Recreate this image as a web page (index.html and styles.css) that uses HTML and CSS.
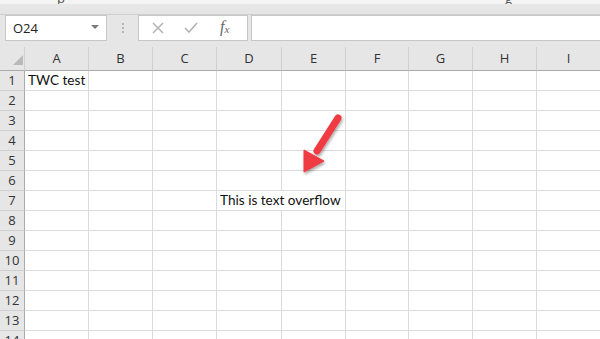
FILE: index.html
```html
<!DOCTYPE html>
<html>
<head>
<meta charset="utf-8">
<link rel="stylesheet" href="styles.css">
</head>
<body>
<div class="app">
  <div class="topstrip"><span class="frag f1">p</span><span class="frag f2">g</span></div>
  <div class="toolbar">
    <div class="namebox"><span class="ref">O24</span><span class="caret"></span></div>
    <div class="dots"><i></i><i></i><i></i></div>
    <div class="fxbox">
      <svg class="ic" width="14" height="14" viewBox="0 0 14 14"><path d="M2 2 L12 12 M12 2 L2 12" stroke="#b3b3b3" stroke-width="1.5" fill="none"/></svg>
      <svg class="ic" width="16" height="14" viewBox="0 0 16 14"><path d="M2 7 L6 11 L14 2" stroke="#b3b3b3" stroke-width="1.6" fill="none"/></svg>
      <span class="fx">f<sub>x</sub></span>
    </div>
    <div class="formula"></div>
  </div>
  <div class="sheet">
    <div class="grid">
      <div class="corner"><span class="tri"></span></div>
      <div class="ch">A</div><div class="ch">B</div><div class="ch">C</div><div class="ch">D</div><div class="ch">E</div><div class="ch">F</div><div class="ch">G</div><div class="ch">H</div><div class="ch">I</div>
      <div class="rh">1</div><div class="c txt">TWC test</div><div class="c"></div><div class="c"></div><div class="c"></div><div class="c"></div><div class="c"></div><div class="c"></div><div class="c"></div><div class="c"></div>
      <div class="rh">2</div><div class="c"></div><div class="c"></div><div class="c"></div><div class="c"></div><div class="c"></div><div class="c"></div><div class="c"></div><div class="c"></div><div class="c"></div>
      <div class="rh">3</div><div class="c"></div><div class="c"></div><div class="c"></div><div class="c"></div><div class="c"></div><div class="c"></div><div class="c"></div><div class="c"></div><div class="c"></div>
      <div class="rh">4</div><div class="c"></div><div class="c"></div><div class="c"></div><div class="c"></div><div class="c"></div><div class="c"></div><div class="c"></div><div class="c"></div><div class="c"></div>
      <div class="rh">5</div><div class="c"></div><div class="c"></div><div class="c"></div><div class="c"></div><div class="c"></div><div class="c"></div><div class="c"></div><div class="c"></div><div class="c"></div>
      <div class="rh">6</div><div class="c"></div><div class="c"></div><div class="c"></div><div class="c"></div><div class="c"></div><div class="c"></div><div class="c"></div><div class="c"></div><div class="c"></div>
      <div class="rh">7</div><div class="c"></div><div class="c"></div><div class="c"></div><div class="c txt over">This is text overflow</div><div class="c"></div><div class="c"></div><div class="c"></div><div class="c"></div><div class="c"></div>
      <div class="rh">8</div><div class="c"></div><div class="c"></div><div class="c"></div><div class="c"></div><div class="c"></div><div class="c"></div><div class="c"></div><div class="c"></div><div class="c"></div>
      <div class="rh">9</div><div class="c"></div><div class="c"></div><div class="c"></div><div class="c"></div><div class="c"></div><div class="c"></div><div class="c"></div><div class="c"></div><div class="c"></div>
      <div class="rh">10</div><div class="c"></div><div class="c"></div><div class="c"></div><div class="c"></div><div class="c"></div><div class="c"></div><div class="c"></div><div class="c"></div><div class="c"></div>
      <div class="rh">11</div><div class="c"></div><div class="c"></div><div class="c"></div><div class="c"></div><div class="c"></div><div class="c"></div><div class="c"></div><div class="c"></div><div class="c"></div>
      <div class="rh">12</div><div class="c"></div><div class="c"></div><div class="c"></div><div class="c"></div><div class="c"></div><div class="c"></div><div class="c"></div><div class="c"></div><div class="c"></div>
      <div class="rh">13</div><div class="c"></div><div class="c"></div><div class="c"></div><div class="c"></div><div class="c"></div><div class="c"></div><div class="c"></div><div class="c"></div><div class="c"></div>
      <div class="rh">14</div><div class="c"></div><div class="c"></div><div class="c"></div><div class="c"></div><div class="c"></div><div class="c"></div><div class="c"></div><div class="c"></div><div class="c"></div>
    </div>
    <svg class="arrow" width="600" height="339" viewBox="0 0 600 339">
      <defs>
        <filter id="sh" x="-50%" y="-50%" width="200%" height="200%">
          <feDropShadow dx="1" dy="2" stdDeviation="1.5" flood-color="#000" flood-opacity="0.35"/>
        </filter>
      </defs>
      <g filter="url(#sh)" fill="#ef3a42" stroke="#ef3a42">
        <line x1="338" y1="118" x2="317" y2="151" stroke-width="7" stroke-linecap="round"/>
        <polygon points="304,150 324,161 304,172" stroke-width="1" stroke-linejoin="round"/>
      </g>
    </svg>
  </div>
</div>
</body>
</html>
```
FILE: styles.css
```css
html, body { margin: 0; padding: 0; }
body { width: 600px; height: 339px; overflow: hidden; background: #fff; font-family: "Open Sans", "Liberation Sans", sans-serif; }
.app { position: relative; width: 600px; height: 339px; overflow: hidden; }
.topstrip { height: 4px; background: #f4f4f4; position: relative; overflow: hidden; }
.frag { position: absolute; top: -11px; font-size: 13px; color: #555; font-family: "Open Sans", sans-serif; }
.f1 { left: 57px; }
.f2 { left: 505px; }
.toolbar { height: 43px; background: linear-gradient(#e8e8e8 0, #e4e4e4 10px, #e6e6e6 10px, #e6e6e6 100%); display: flex; align-items: flex-start; box-sizing: border-box; padding-top: 11px; position: relative; }
.toolbar::before { content: ""; position: absolute; left: 0; right: 0; top: 10px; height: 1px; background: #cfcfcf; }
.namebox { margin-left: 5px; width: 100px; height: 24px; background: #fff; border: 1px solid #c6c6c6; display: flex; align-items: center; justify-content: space-between; box-sizing: content-box; }
.ref { font-size: 13px; color: #222; margin-left: 7px; }
.caret { width: 0; height: 0; border-left: 4px solid transparent; border-right: 4px solid transparent; border-top: 4px solid #7a7a7a; margin-right: 7px; margin-top: -3px; }
.dots { width: 31px; height: 26px; display: flex; flex-direction: column; align-items: center; justify-content: center; gap: 2px; }
.dots i { display: block; width: 2px; height: 2px; background: #b5b5b5; }
.fxbox { width: 108px; height: 24px; background: #fff; border: 1px solid #c6c6c6; display: flex; align-items: center; box-sizing: content-box; }
.fxbox .ic:first-child { margin-left: 12px; }
.fxbox .ic:nth-child(2) { margin-left: 18px; }
.fx { margin-left: 21px; font-family: "Liberation Serif", serif; font-style: italic; font-size: 16px; color: #666; line-height: 1; margin-top: -2px; }
.fx sub { font-size: 11px; vertical-align: -1px; }
.formula { margin-left: 3px; flex: 1; height: 24px; background: #fff; border: 1px solid #c6c6c6; border-right: 0; }
.sheet { position: relative; }
.grid { display: grid; grid-template-columns: 25px 64px 64px 64px 65px 64px 63px 64px 64px 64px; grid-template-rows: 24px repeat(14, 20px); }
.corner { background: #e6e6e6; border-right: 1px solid #cfcfcf; border-bottom: 1px solid #ababab; box-sizing: border-box; position: relative; }
.tri { position: absolute; left: 13px; top: 8px; width: 0; height: 0; border-left: 10px solid transparent; border-bottom: 10px solid #b9b9b9; }
.ch { background: #e6e6e6; border-right: 1px solid #cfcfcf; border-bottom: 1px solid #ababab; box-sizing: border-box; font-size: 13px; color: #333; text-align: center; line-height: 23px; }
.rh { background: #e6e6e6; border-right: 1px solid #ababab; border-bottom: 1px solid #cfcfcf; box-sizing: border-box; font-size: 13px; color: #333; text-align: center; line-height: 19px; }
.c { border-right: 1px solid #dadada; border-bottom: 1px solid #dadada; box-sizing: border-box; position: relative; }
.txt { font-family: "Lato", "Open Sans", sans-serif; font-size: 13.6px; color: #111; line-height: 19px; padding-left: 3px; white-space: nowrap; z-index: 2; }
.over { border-right: 0; }
.arrow { position: absolute; left: 0; top: -47px; pointer-events: none; z-index: 5; }
```
